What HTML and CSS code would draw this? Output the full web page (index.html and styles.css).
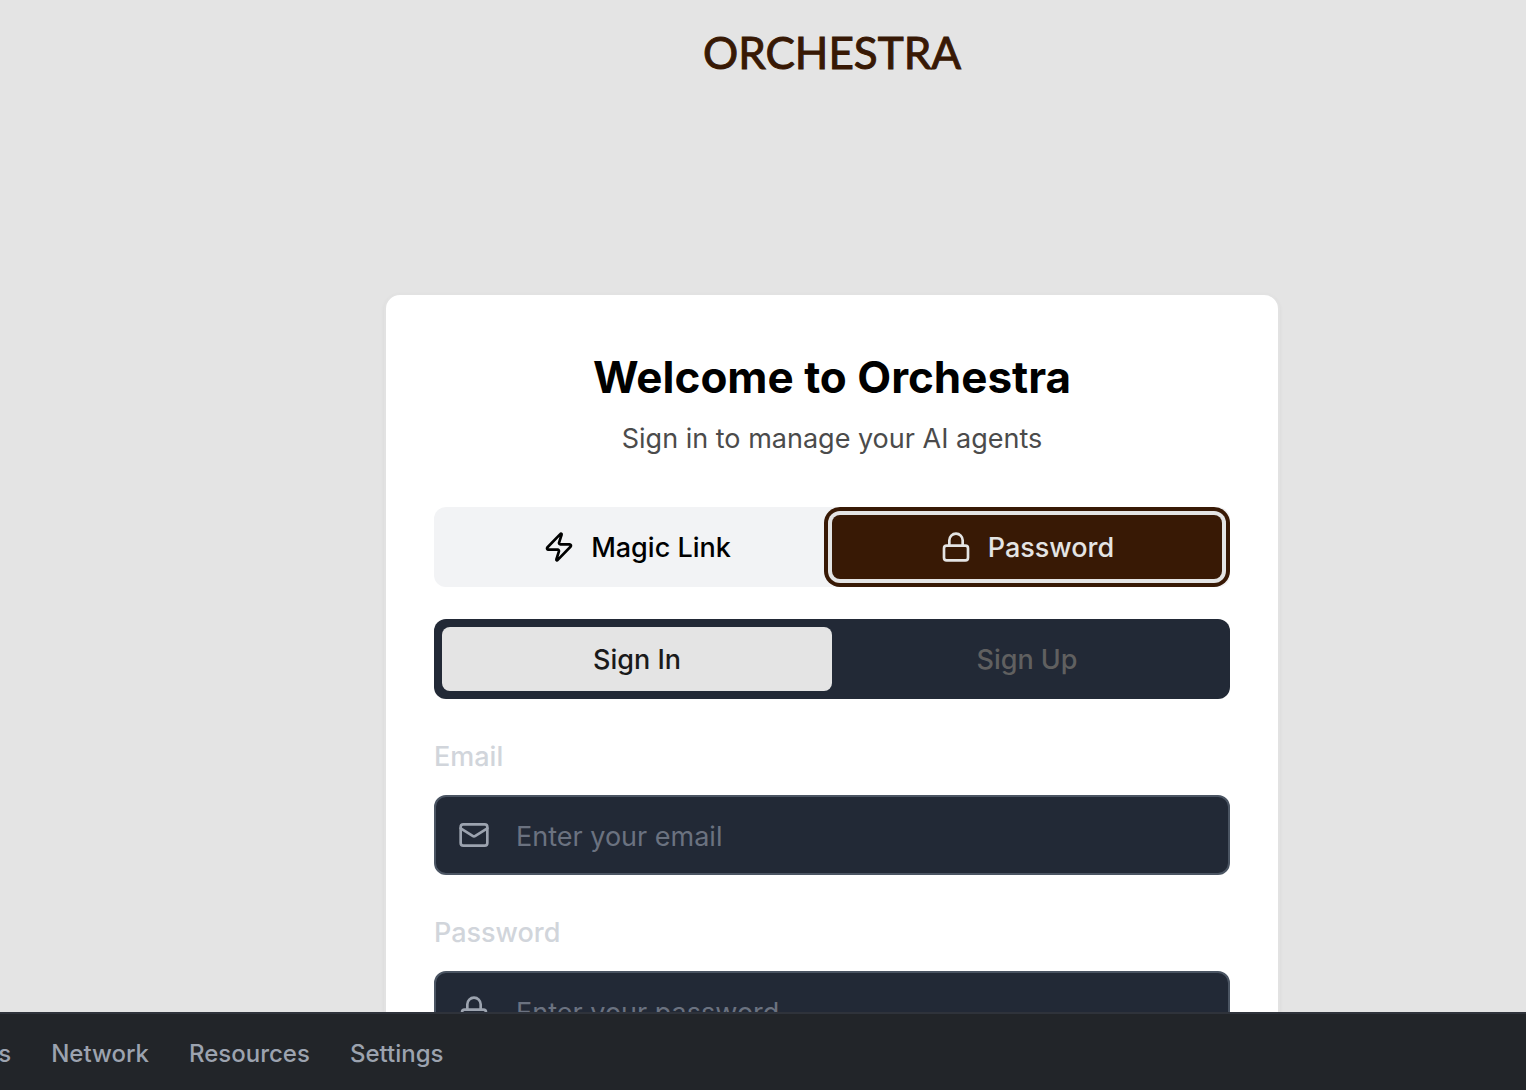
FILE: index.html
```html
<!DOCTYPE html>
<html lang="en">
<head>
<meta charset="utf-8">
<meta name="viewport" content="width=device-width, initial-scale=1">
<title>Orchestra</title>
<link rel="stylesheet" href="styles.css">
</head>
<body>
<div class="page">
  <header class="brand">ORCHESTRA</header>
  <main class="card">
    <h1 class="title">Welcome to Orchestra</h1>
    <p class="subtitle">Sign in to manage your AI agents</p>
    <div class="tabs">
      <button class="tab" type="button">
        <svg class="icon" viewBox="0 0 24 24" aria-hidden="true"><path d="M4 14a1 1 0 0 1-.78-1.63l9.9-10.2a.5.5 0 0 1 .86.46l-1.92 6.02A1 1 0 0 0 13 10h7a1 1 0 0 1 .78 1.63l-9.9 10.2a.5.5 0 0 1-.86-.46l1.92-6.02A1 1 0 0 0 11 14z"/></svg>
        Magic Link
      </button>
      <button class="tab tab-selected" type="button">
        <svg class="icon" viewBox="0 0 24 24" aria-hidden="true"><rect x="3" y="11" width="18" height="11" rx="2"/><path d="M7 11V7a5 5 0 0 1 10 0v4"/></svg>
        Password
      </button>
    </div>
    <div class="tabs tabs-dark">
      <button class="tab tab-current" type="button">Sign In</button>
      <button class="tab tab-muted" type="button">Sign Up</button>
    </div>
    <form class="form">
      <div class="field">
        <label class="label" for="email">Email</label>
        <div class="control">
          <svg class="icon" viewBox="0 0 24 24" aria-hidden="true"><rect x="2" y="4" width="20" height="16" rx="2"/><path d="m22 7-8.97 5.7a1.94 1.94 0 0 1-2.06 0L2 7"/></svg>
          <input class="input" id="email" type="email" placeholder="Enter your email">
        </div>
      </div>
      <div class="field">
        <label class="label" for="password">Password</label>
        <div class="control">
          <svg class="icon" viewBox="0 0 24 24" aria-hidden="true"><rect x="3" y="11" width="18" height="11" rx="2"/><path d="M7 11V7a5 5 0 0 1 10 0v4"/></svg>
          <input class="input" id="password" type="password" placeholder="Enter your password">
        </div>
      </div>
    </form>
  </main>
</div>
<nav class="dock">
  <div class="dock-links">
    <a class="dock-link" href="#agents">Agents</a>
    <a class="dock-link" href="#network">Network</a>
    <a class="dock-link" href="#resources">Resources</a>
    <a class="dock-link" href="#settings">Settings</a>
  </div>
</nav>
</body>
</html>
```
FILE: styles.css
```css
* {
  box-sizing: border-box;
}

body {
  margin: 0;
  height: 100vh;
  overflow: hidden;
  background: #e4e4e4;
  color: #000;
  font-family: Inter, "Liberation Sans", sans-serif;
  font-size: 27px;
}

.page {
  display: flex;
  flex-direction: column;
  align-items: center;
  gap: 213px;
  padding: 24px 0 96px 138px;
}

.brand {
  color: #381905;
  font-family: Lato, sans-serif;
  font-size: 44px;
  line-height: 56px;
  -webkit-text-stroke: 1px #381905;
}

.card {
  width: 100%;
  max-width: 896px;
  padding: 56px 48px 48px;
  background: #fff;
  border: 2px solid #e2e2e2;
  border-radius: 16px;
  box-shadow: 0 2px 4px rgb(0 0 0 / 5%);
}

.title {
  margin: 0 0 16px;
  font-size: 44px;
  font-weight: 700;
  line-height: 52px;
  text-align: center;
}

.subtitle {
  margin: 0 0 48px;
  color: #4b4b4b;
  line-height: 40px;
  text-align: center;
}

.tabs {
  display: grid;
  grid-template-columns: 1fr 1fr;
  margin-bottom: 32px;
  padding: 8px;
  background: #f2f3f5;
  border-radius: 12px;
}

.tabs-dark {
  margin-bottom: 40px;
  background: #222936;
}

.tab {
  display: flex;
  align-items: center;
  justify-content: center;
  gap: 16px;
  height: 64px;
  padding: 0;
  background: transparent;
  border: 0;
  border-radius: 8px;
  color: #000;
  font: inherit;
  font-weight: 500;
}

.tab-selected {
  background: #381905;
  color: #e4e4e4;
  box-shadow: 0 0 0 4px #e4e4e4, 0 0 0 8px #381905;
}

.tab-current {
  background: #e4e4e4;
  color: #1a1a1a;
}

.tab-muted {
  color: #606060;
}

.icon {
  flex: none;
  width: 32px;
  height: 32px;
  fill: none;
  stroke: currentColor;
  stroke-width: 2;
  stroke-linecap: round;
  stroke-linejoin: round;
}

.form {
  display: grid;
  gap: 40px;
}

.field {
  display: grid;
  gap: 20px;
}

.label {
  color: #d1d5db;
  font-weight: 500;
  line-height: 36px;
}

.control {
  display: flex;
  align-items: center;
  gap: 26px;
  height: 80px;
  padding: 0 22px;
  background: #222936;
  border: 2px solid #4b5563;
  border-radius: 12px;
  color: #9ca3af;
}

.input {
  flex: 1;
  min-width: 0;
  height: 40px;
  padding: 2px 0 0;
  background: transparent;
  border: 0;
  color: #e4e4e4;
  font: inherit;
}

.input::placeholder {
  color: #6b7280;
  opacity: 1;
}

.dock {
  position: fixed;
  inset: auto 0 0;
  overflow: hidden;
  background: #222529;
  border-top: 2px solid #2f333b;
}

.dock-links {
  display: flex;
  gap: 40px;
  margin-left: -70px;
  padding: 22px 0 18px;
}

.dock-link {
  color: #9ca3af;
  font-size: 24px;
  font-weight: 500;
  line-height: 36px;
  text-decoration: none;
}
```
